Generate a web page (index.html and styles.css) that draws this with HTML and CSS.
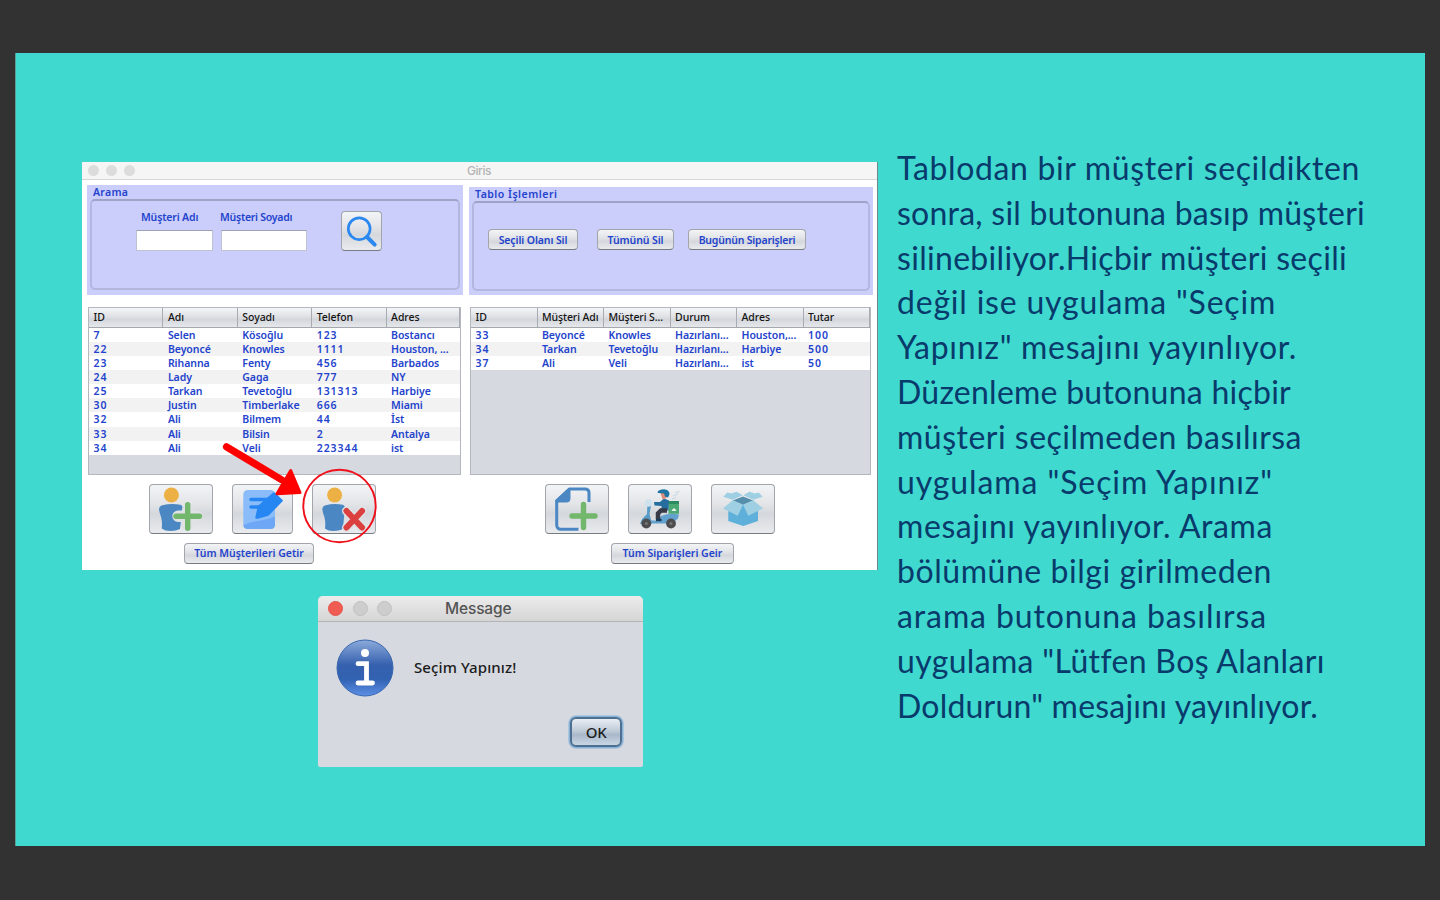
FILE: index.html
```html
<!DOCTYPE html>
<html lang="tr">
<head>
<meta charset="utf-8">
<title>Seçim Yapınız</title>
<link rel="stylesheet" href="styles.css">
</head>
<body>
<main class="slide">
  <section class="shots">
    <div class="window">
      <header class="titlebar"><i class="dot"></i><i class="dot"></i><i class="dot"></i><span class="win-title">Giris</span></header>
      <div class="cols">
        <div class="col left">
          <div class="panel">
            <div class="legend">Arama</div>
            <div class="frame search">
              <label class="field first"><span>Müşteri Adı</span><i class="input"></i></label>
              <label class="field second"><span>Müşteri Soyadı</span><i class="input"></i></label>
              <button class="btn search-btn"><svg width="41" height="40" viewBox="0 0 41 40" fill="none" stroke="#2a88f0" stroke-linecap="round"><circle cx="18.2" cy="17.700" r="10.9" stroke-width="2.7"/><path d="M26 26l7.7 7.6" stroke-width="4"/></svg></button>
            </div>
          </div>
          <div class="grid customers">
            <div class="row head"><b>ID</b><b>Adı</b><b>Soyadı</b><b>Telefon</b><b>Adres</b></div>
            <div class="row"><span class="num">7</span><span>Selen</span><span>Kösoğlu</span><span class="num">123</span><span>Bostancı</span></div>
            <div class="row"><span class="num">22</span><span>Beyoncé</span><span>Knowles</span><span class="num">1111</span><span>Houston, ...</span></div>
            <div class="row"><span class="num">23</span><span>Rihanna</span><span>Fenty</span><span class="num">456</span><span>Barbados</span></div>
            <div class="row"><span class="num">24</span><span>Lady</span><span>Gaga</span><span class="num">777</span><span>NY</span></div>
            <div class="row"><span class="num">25</span><span>Tarkan</span><span>Tevetoğlu</span><span class="num">131313</span><span>Harbiye</span></div>
            <div class="row"><span class="num">30</span><span>Justin</span><span>Timberlake</span><span class="num">666</span><span>Miami</span></div>
            <div class="row"><span class="num">32</span><span>Ali</span><span>Bilmem</span><span class="num">44</span><span>İst</span></div>
            <div class="row"><span class="num">33</span><span>Ali</span><span>Bilsin</span><span class="num">2</span><span>Antalya</span></div>
            <div class="row"><span class="num">34</span><span>Ali</span><span>Veli</span><span class="num">223344</span><span>ist</span></div>
          </div>
          <div class="icons">
            <button class="btn w64"><svg width="64" height="50" viewBox="0 0 64 50"><circle cx="22.4" cy="11" r="7.5" fill="#ecb045"/><path d="M10 25.500q0-3.500 3.500-4.200Q22 19 31.500 20.800q2 .7 2 3L31 45q-4 2-9.500 2T12.700 44.500q.8-6-.6-11.500-1.600-4-2.100-7.500z" fill="#4b87c2"/><path d="M38.500 27v14M29 32.300h19" stroke="#dfe1e5" stroke-width="11.500" stroke-linecap="round"/><path d="M38.700 20.800v23.500M27 32.300h23.500" stroke="#72b76b" stroke-width="5.400" stroke-linecap="round"/></svg></button>
            <button class="btn w61"><svg width="61" height="50" viewBox="0 0 61 50"><rect x="11.300" y="6" width="31.700" height="39" rx="4.500" fill="#8abcf9"/><path d="M11.300 41.500C20 36 32 37.500 43 32.500v8q0 4.500-4.500 4.500H16q-4 0-4.700-3.500z" fill="#6da7f5"/><path d="M19 15.600h18M19 23h11" stroke="#2787f2" stroke-width="3.500" stroke-linecap="round"/><path d="M24.500 33.500L27 22.500 42 9.500l7.500 7.200L36 30.500 25.500 33.500z" fill="#2787f2" stroke="#2787f2" stroke-width="2.500" stroke-linejoin="round"/></svg></button>
            <button class="btn w64"><svg width="64" height="50" viewBox="0 0 64 50"><circle cx="22.600" cy="11" r="7.500" fill="#ecb045"/><path d="M10.300 25.500q0-3.500 3.500-4.200 8-2.300 17-.5 2 .7 2 3L31 45q-4 2-9.500 2T13 44.500q.8-6-.6-11.500-1.600-4-2.100-7.500z" fill="#4b87c2"/><path d="M34.500 27l15.500 16.500M50 27L34.500 43.500" stroke="#dfe1e5" stroke-width="9" stroke-linecap="round"/><path d="M34.500 27l15.500 16.500M50 27L34.500 43.500" stroke="#dc3f3f" stroke-width="6" stroke-linecap="round"/></svg></button>
          </div>
          <button class="btn text wide-l">Tüm Müşterileri Getir</button>
        </div>
        <div class="col right">
          <div class="panel">
            <div class="legend wide">Tablo İşlemleri</div>
            <div class="frame actions"><button class="btn text a1">Seçili Olanı Sil</button><button class="btn text a2">Tümünü Sil</button><button class="btn text a3">Bugünün Siparişleri</button></div>
          </div>
          <div class="grid orders">
            <div class="row head"><b>ID</b><b>Müşteri Adı</b><b>Müşteri S...</b><b>Durum</b><b>Adres</b><b>Tutar</b></div>
            <div class="row"><span class="num">33</span><span>Beyoncé</span><span>Knowles</span><span>Hazırlanı...</span><span>Houston,...</span><span class="num">100</span></div>
            <div class="row"><span class="num">34</span><span>Tarkan</span><span>Tevetoğlu</span><span>Hazırlanı...</span><span>Harbiye</span><span class="num">500</span></div>
            <div class="row"><span class="num">37</span><span>Ali</span><span>Veli</span><span>Hazırlanı...</span><span>ist</span><span class="num">50</span></div>
          </div>
          <div class="icons">
            <button class="btn w64"><svg width="64" height="50" viewBox="0 0 64 50" fill="none"><path d="M33.500 45.300H16q-4.300 0-4.300-4.300V17L24.500 5H40q4 0 4 4V18" stroke="#4b87c2" stroke-width="3"/><path d="M10.500 18.500V16L23.500 4h2v10q0 4.500-4.500 4.500z" fill="#4b87c2"/><path d="M38.500 20.500v23M27 32h23" stroke="#72b76b" stroke-width="5.400" stroke-linecap="round"/></svg></button>
            <button class="btn w64"><svg width="64" height="50" viewBox="0 0 64 50" fill="none"><path d="M47 8.500l4.500-1M45 12l5-2M44 15l4-1.500" stroke="#c5d8e5"/><rect x="40.500" y="17" width="10.500" height="12.800" fill="#4ba873"/><path d="M40.500 17H51v3H40.500z" fill="#2d8b61"/><path d="M43.500 27q2.500-5.500 5 0z" fill="#e8f5ee"/><path d="M33 32q9-3.500 18-1.500l-1 4-3 2.500q-4-4-8.500 2.500H22v-3h9z" fill="#63a2ce"/><path d="M19.500 17l4 2-2 11 2.500 9.500H13l1-4.500 5-5z" fill="#579bc8"/><circle cx="20.500" cy="19" r="3.800" fill="#cfe1ec"/><path d="M12 40q1.500-7 8-6l3 6z" fill="#63a2ce"/><path d="M26 18h6l4-3.500 5 2-.5 10h-7v-4.500l-7-.5z" fill="#256d9e"/><path d="M39 26.500h-6l-3 3v6" stroke="#383b47" stroke-width="4.500"/><path d="M28 36h5.500" stroke="#183c5b" stroke-width="2.500"/><path d="M32.500 9h6v5l-4 1.500z" fill="#df8b79"/><path d="M29.500 8Q31 5.300 36 5.300q5.500.7 5.500 5L40 13.500l-3-1-1-3-6-.5z" fill="#1e75a3"/><circle cx="18.300" cy="39.500" r="4.900" fill="#4d4d50"/><circle cx="43" cy="39.500" r="4.900" fill="#4d4d50"/><circle cx="18.300" cy="39.500" r="1.500" fill="#777"/><circle cx="43" cy="39.500" r="1.500" fill="#777"/></svg></button>
            <button class="btn w64"><svg width="64" height="50" viewBox="0 0 64 50"><path d="M17.300 24L32 20 47 24v13l-14.700 5L17.300 37z" fill="#5eb0da"/><path d="M21.700 16.500l10.300-4 10.300 4L32 20.800z" fill="#568fac"/><path d="M12.300 12.700l4-4.200 4 1 5.400-1.800 6 3.600-10 4.400zM51.700 12.700l-4-4.200-4 1-5.400-1.800-6 3.600 10 4.400z" fill="#9fcfe3"/><path d="M21.700 16.200L32 20.800l-5.300 11L12 24.500zM42.300 16.200L32 20.800l5.300 11L52 24.500z" fill="#9fcfe3"/></svg></button>
          </div>
          <button class="btn text wide-r">Tüm Siparişleri Geir</button>
        </div>
      </div>
      <svg class="marker" width="170" height="115" viewBox="215 435 170 115"><path d="M226.500 446.800L282 480" stroke="#f00" stroke-width="7.200" stroke-linecap="round"/><path d="M290.700 470.500L300 492.500 277 493.800z" fill="#f00" stroke="#f00" stroke-width="3" stroke-linejoin="round"/><circle cx="339.500" cy="506" r="36.200" fill="none" stroke="#f0101c" stroke-width="1.900"/></svg>
    </div>
    <div class="dialog">
      <header class="dlg-bar"><i class="dot close"></i><i class="dot"></i><i class="dot"></i><span class="dlg-title">Message</span></header>
      <div class="dlg-body">
        <svg width="58" height="58" viewBox="0 0 58 58"><defs><linearGradient id="info" x2="0" y2="1"><stop offset="0" stop-color="#8cabdc"/><stop offset=".45" stop-color="#3560ae"/><stop offset=".7" stop-color="#3262b2"/><stop offset="1" stop-color="#5c90e6"/></linearGradient></defs><circle cx="29" cy="29" r="28" fill="url(#info)" stroke="#3766ae"/><circle cx="29" cy="14" r="4" fill="#fff"/><path d="M22 24.700h8.500V44M22 44h14.500" fill="none" stroke="#fff" stroke-width="4.800" stroke-linecap="round"/></svg>
        <span class="dlg-text">Seçim Yapınız!</span>
      </div>
      <button class="ok">OK</button>
    </div>
  </section>
  <p class="copy">
    <span class="l1">Tablodan bir müşteri seçildikten</span>
    <span class="l2">sonra, sil butonuna basıp müşteri</span>
    <span class="l3">silinebiliyor.Hiçbir müşteri seçili</span>
    <span class="l4">değil ise uygulama "Seçim</span>
    <span class="l5">Yapınız" mesajını yayınlıyor.</span>
    <span class="l6">Düzenleme butonuna hiçbir</span>
    <span class="l7">müşteri seçilmeden basılırsa</span>
    <span class="l8">uygulama "Seçim Yapınız"</span>
    <span class="l9">mesajını yayınlıyor. Arama</span>
    <span class="l10">bölümüne bilgi girilmeden</span>
    <span class="l11">arama butonuna basılırsa</span>
    <span class="l12">uygulama "Lütfen Boş Alanları</span>
    <span class="l13">Doldurun" mesajını yayınlıyor.</span>
  </p>
</main>
</body>
</html>
```
FILE: styles.css
```css
*{box-sizing:border-box}
body{margin:0;height:900px;padding:53px 15px 54px;background:#323232;overflow:hidden}
i{font-style:normal}
.slide{display:flex;height:793px;background:#3fd9d0;border-left:1px solid #5b9c97}
.shots{width:796px;margin:109px 0 0 66px;flex:none}

/* Main window */
.window{position:relative;width:795.5px;height:408px;background:#fff;border-right:1px solid #71888b;font:600 10.5px/14px "Noto Sans",sans-serif;color:#2343cc}
.titlebar{display:flex;align-items:center;gap:7px;height:18px;padding:0 0 1px 6px;background:#f5f5f5;border-bottom:1px solid #d6d6d6}
.dot{width:11px;height:11px;border-radius:50%;background:#dcdcdc;flex:none}
.win-title{margin-left:325px;font:500 12px Inter,sans-serif;letter-spacing:-.45px;color:#b4b4b4}
.cols{display:flex;gap:6px;padding:5px 0 0 5px}
.left{width:376px}
.right{width:403.500px;padding-top:2px}
.panel{background:#cbcefb;height:110px;padding:0 3px 4px}
.right .panel{height:108px}
.legend{height:14px;padding-left:3px;line-height:15px;letter-spacing:.3px}
.legend.wide{letter-spacing:.5px}
.frame{height:91px;border:2px solid #b3b6df;border-top-color:#a0a3c8;border-radius:5px;display:flex;align-items:flex-start}
.right .frame{height:90px}
.btn{display:flex;align-items:center;justify-content:center;margin:0;padding:0;border:1px solid #a2a5ab;border-bottom:1.500px solid #787b82;border-radius:4px;background:linear-gradient(#f3f4f6,#e2e4e7 40%,#d4d7dc 60%,#e9ebee);font:inherit;color:inherit;white-space:nowrap;flex:none}
.btn svg{display:block;flex:none;margin:-1px}
.field{display:flex;flex-direction:column;gap:6px;white-space:nowrap;letter-spacing:-.15px}
.field span{padding-left:5px}
.field.second span{padding-left:0;margin-left:-1px;letter-spacing:-.25px}
.input{display:block;height:21px;background:#fff;border:1px solid #bfc1d4;border-top-color:#9fa2b5}
.search{padding-top:9px}
.first{width:77px;margin-left:44px}
.second{width:86px;margin-left:8px}
.search-btn{width:41px;height:40px;margin:1px 0 0 34px}
.actions{padding-top:26px}
.text{height:21px}
.a1{width:90px;margin-left:14px;letter-spacing:-.1px}
.a2{width:77px;margin-left:19px;letter-spacing:-.1px}
.a3{width:118px;margin-left:14px;letter-spacing:-.2px}

/* Tables */
.grid{height:168px;margin:12px 0 9px 1px;border:1px solid #b4b8be;background:#d6d9df}
.customers{width:373px}
.orders{width:401px}
.row{display:grid;height:14.170px;line-height:15.600px;background:#fff;white-space:nowrap}
.customers .row{grid-template-columns:74.400px 74.400px 74.400px 74.400px 1fr}
.orders .row{grid-template-columns:66.500px 66.500px 66.500px 66.500px 66.500px 1fr}
.row>*{padding-left:4.500px;overflow:hidden;letter-spacing:-.05px}
.row:nth-child(odd){background:#f2f2f2}
.row.head{height:19.500px;line-height:18px;background:linear-gradient(#f4f5f7,#dfe1e5 45%,#d3d6db 60%,#e6e8eb);border-bottom:1px solid #a4a7ad;color:#141414}
.head b{font-weight:500;border-right:1px solid #a8abb1}
.row .num{letter-spacing:.95px}
.orders .head b:nth-child(2),.orders .head b:nth-child(3){letter-spacing:-.1px}

/* Icon buttons */
.icons{display:flex}
.w64{width:64px;height:50px}
.w61{width:61px;height:50px}
.left .icons{padding-left:62px;gap:19px}
.right .icons{padding-left:76px;gap:19px}
.wide-l{width:130px;margin:8.500px 0 0 97px}
.wide-r{width:123px;margin:8.500px 0 0 142px}
.marker{position:absolute;left:133px;top:273px}

/* Message dialog */
.dialog{width:325px;height:171px;margin:26px 0 0 236px;border-radius:5px 5px 2px 2px;background:#d6d9df;overflow:hidden}
.dlg-bar{display:flex;align-items:center;gap:9.500px;height:26px;padding:0 0 1px 10px;background:linear-gradient(#ececec,#d5d5d5);border-bottom:1px solid #b5b5b5}
.dlg-bar .dot{width:15px;height:15px;background:#cdcdcd;border:1px solid #c0c0c0}
.dlg-bar .close{background:#f05b52;border-color:#e5554d}
.dlg-title{margin-left:43.500px;font:500 15.500px Inter,sans-serif;letter-spacing:-.15px;color:#545454}
.dlg-body{display:flex;align-items:center;gap:20px;padding:17px 0 0 18px;font:500 15px/20px "Noto Sans",sans-serif;letter-spacing:.1px;color:#1c1c1c}
.dlg-text{margin-top:-2px}
.ok{display:block;width:52px;height:30px;margin:20px 0 0 252px;padding:0;border:2px solid #4e6f90;border-radius:6px;box-shadow:0 0 0 1.500px #86b3d9;background:linear-gradient(#e9eef4,#c0cbd8 45%,#a9b8c9 60%,#c8d6e5);font:500 15px "Noto Sans",sans-serif;letter-spacing:-.4px;color:#1c1c1c}

.copy{margin:93px 0 0 19px;font:32px/44.800px Lato,sans-serif;color:#083a6b;white-space:nowrap}
.copy span{display:block}
.l1{letter-spacing:.639px}.l2{letter-spacing:.243px}.l3{letter-spacing:.308px}.l4{letter-spacing:.794px}
.l5{letter-spacing:.675px}.l6{letter-spacing:.251px}.l7{letter-spacing:.496px}.l8{letter-spacing:.899px}
.l9{letter-spacing:.590px}.l10{letter-spacing:.547px}.l11{letter-spacing:.896px}.l12{letter-spacing:.336px}.l13{letter-spacing:.198px}
```
